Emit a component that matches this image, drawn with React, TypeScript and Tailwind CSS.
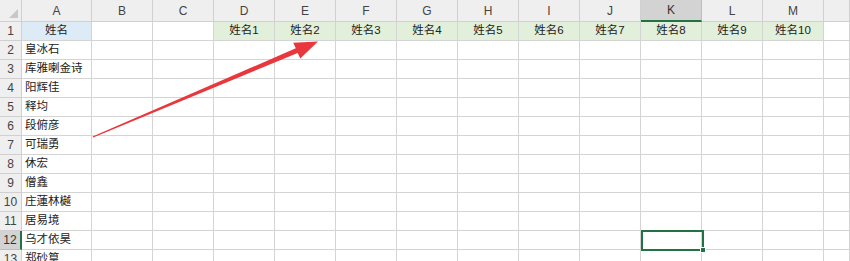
import React from 'react'

const cols = ['A', 'B', 'C', 'D', 'E', 'F', 'G', 'H', 'I', 'J', 'K', 'L', 'M', 'N']
const names = ['皇冰石', '库雅喇金诗', '阳辉佳', '释均', '段俯彦', '可瑞勇', '休宏', '僧鑫', '庄蓮林樾', '居易境', '乌才依昊', '郑砂篁']
const font = { fontFamily: '"Liberation Sans", "Noto Sans CJK SC", sans-serif' }

export default function App() {
  const rows = Array.from({ length: 13 }, (_, i) => i + 1)

  return (
    <div className="relative w-[850px] h-[261px] overflow-hidden bg-white text-[#222]" style={font}>
      <div className="grid grid-cols-[22px_70px_repeat(12,61px)_1fr] grid-rows-[22px_repeat(13,19px)]">
        {/* 左上角 */}
        <div className="relative bg-[#efefef] border-r border-b border-[#d0d0d0]">
          <svg className="absolute right-[3px] bottom-[3px]" width="9" height="9" viewBox="0 0 9 9">
            <polygon points="9,0 9,9 0,9" fill="#c8c8c8" />
          </svg>
        </div>
        {/* 列标 */}
        {cols.map((c) =>
          c === 'K' ? (
            <div key={c} className="flex items-center justify-center bg-[#d3d3d3] border-r border-[#bdbdbd] border-b-2 border-b-[#217346] text-[12px] text-[#333]">
              {c}
            </div>
          ) : (
            <div key={c} className="flex items-center justify-center bg-[#efefef] border-r border-b border-[#d0d0d0] text-[12px] text-[#444]">
              {c !== 'N' ? c : ''}
            </div>
          )
        )}
        {rows.map((r) => (
          <React.Fragment key={r}>
            {r === 12 ? (
              <div className="flex items-center justify-center bg-[#d3d3d3] border-b border-[#bdbdbd] border-r-2 border-r-[#217346] text-[12px] text-[#333]">
                {r}
              </div>
            ) : (
              <div className="flex items-center justify-center bg-[#efefef] border-r border-b border-[#d0d0d0] text-[12px] text-[#444]">
                {r}
              </div>
            )}
            {cols.map((c, ci) => {
              if (r === 1) {
                if (c === 'A')
                  return (
                    <div key={c} className="flex items-center justify-center bg-[#ddebf7] border-r border-b border-[#d4d4d4] text-[11.5px]">
                      姓名
                    </div>
                  )
                if (ci >= 3 && ci <= 12)
                  return (
                    <div key={c} className="flex items-center justify-center bg-[#e2efda] border-r border-b border-[#d4d4d4] text-[11.5px]">
                      姓名{ci - 2}
                    </div>
                  )
              }
              if (c === 'A')
                return (
                  <div key={c} className="flex items-center pl-[3px] border-r border-b border-[#d4d4d4] text-[11.5px] whitespace-nowrap">
                    {names[r - 2]}
                  </div>
                )
              return <div key={c} className="border-r border-b border-[#d4d4d4]" />
            })}
          </React.Fragment>
        ))}
      </div>

      {/* 选中单元格 K12 */}
      <div className="absolute left-[641px] top-[230px] w-[63px] h-[21px] border-2 border-[#217346]">
        <div className="absolute -right-[4px] -bottom-[4px] w-[6px] h-[6px] bg-[#217346] border border-white" />
      </div>

      {/* 红色箭头 */}
      <svg className="absolute left-0 top-0 pointer-events-none" width="850" height="261">
        <polygon
          points="92.6,136.4 295.8,48.3 293.2,42.8 318,41.5 300.3,58.4 297.7,52.9 93.2,137.6"
          fill="#e8383d"
        />
      </svg>
    </div>
  )
}
